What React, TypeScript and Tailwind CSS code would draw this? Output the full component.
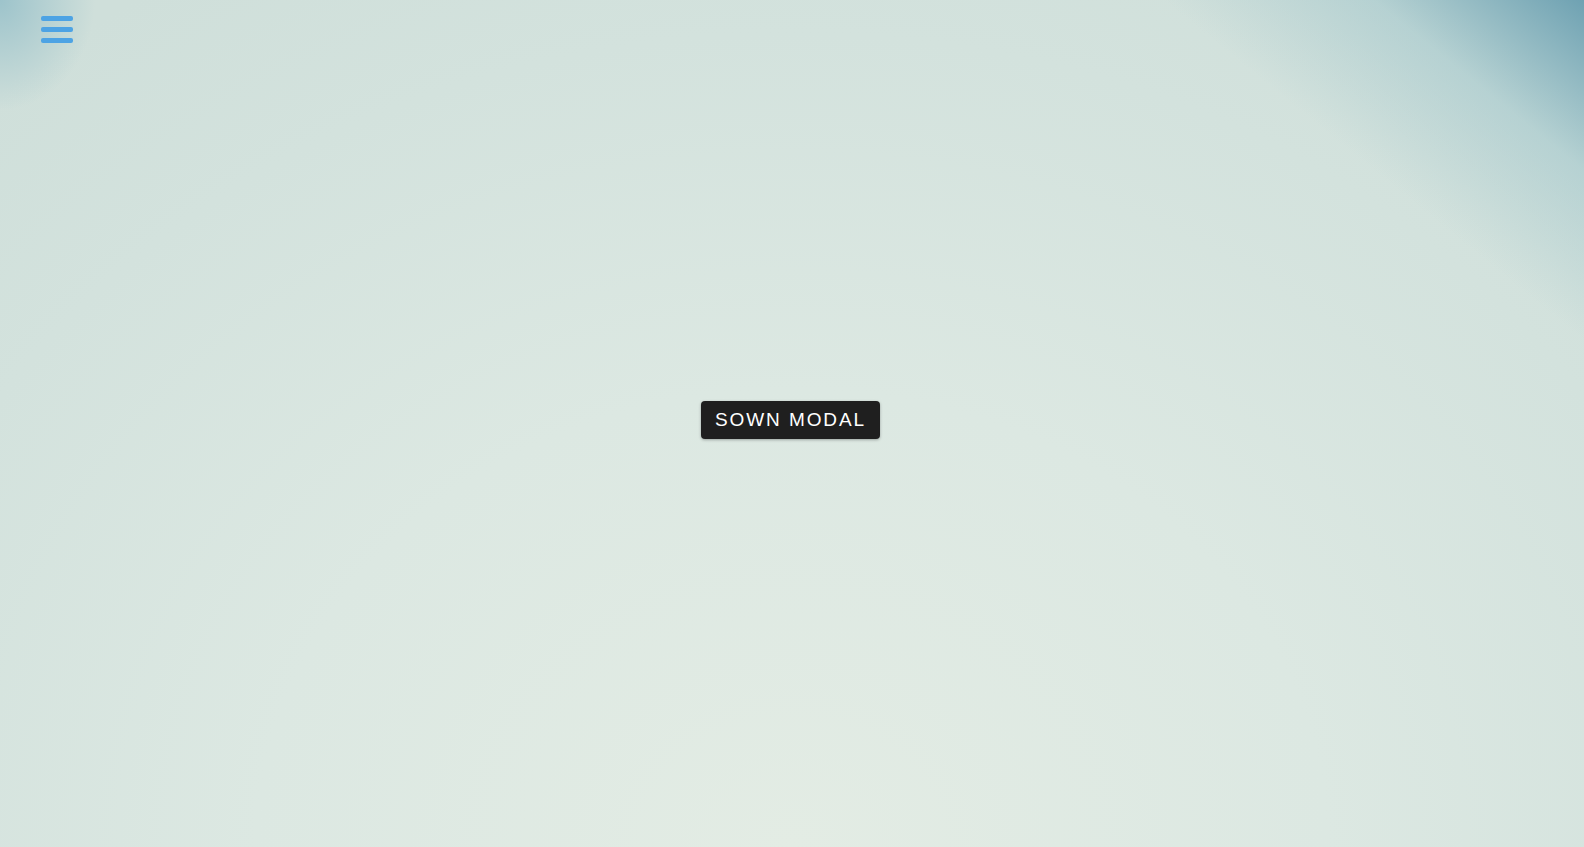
import React from "react";

function MenuIcon() {
  return (
    <button className="flex flex-col gap-[6px] p-0" aria-label="menu">
      <span className="block h-[5px] w-[32px] rounded-[2px] bg-[#4da3e4]" />
      <span className="block h-[5px] w-[32px] rounded-[2px] bg-[#4da3e4]" />
      <span className="block h-[5px] w-[32px] rounded-[2px] bg-[#4da3e4]" />
    </button>
  );
}

export default function App() {
  return (
    <div className="relative h-screen w-full overflow-hidden bg-[linear-gradient(39deg,rgba(210,226,221,0)_84%,rgba(150,192,200,0.45)_92%,rgba(100,155,174,0.9)_100%),radial-gradient(ellipse_6%_13%_at_0%_0%,rgba(140,186,198,0.75),rgba(210,226,221,0)_100%),radial-gradient(ellipse_75%_120%_at_50%_100%,#e3ece4_0%,#dce8e2_45%,#d3e2dd_80%,#cfdfda_100%)]">
      <nav className="absolute left-[41px] top-[16px] z-10">
        <MenuIcon />
      </nav>
      <main className="flex h-full items-center justify-center pb-[7px] pr-[3px]">
        <button className="rounded-[4px] bg-[#1f1f1f] px-[14px] py-[8px] text-[19px] leading-[22px] tracking-[1.9px] text-white shadow-[0_1px_3px_rgba(0,0,0,0.3)] font-['Liberation_Sans',Arial,sans-serif]">
          SOWN MODAL
        </button>
      </main>
    </div>
  );
}
